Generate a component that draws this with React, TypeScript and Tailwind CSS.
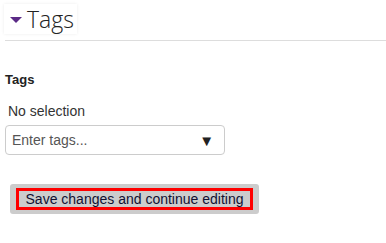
export default function App() {
  return (
    <div className="h-[243px] w-[386px] bg-white font-['Liberation_Sans',Arial,sans-serif] text-[#333]">
      <div className="pl-[4px] pt-[4px]">
        <div className="flex h-[30px] w-[73px] items-center gap-[5px] bg-white pl-[6px] shadow-[0_0_3px_rgba(0,0,0,0.08)]">
          <span className="mt-[2px] block h-0 w-0 border-x-[6px] border-t-[6px] border-x-transparent border-t-[#5b2a86]" />
          <span className="font-['Open_Sans',sans-serif] text-[23px] font-light leading-none text-[#222]">Tags</span>
        </div>
      </div>
      <div className="ml-[5px] mt-[6px] h-px bg-[#ddd]" />

      <div className="px-[5px] pt-[31px]">
        <div className="text-[13px] font-semibold leading-[16px] text-[#222]">Tags</div>
        <div className="mt-[15px] pl-[3px] text-[14px] leading-[16px] text-[#333]">No selection</div>
        <div className="mt-[6px] flex h-[30px] w-[220px] items-center justify-between rounded-[4px] border border-[#ccc] pl-[6px] pr-[10px]">
          <span className="text-[14px] text-[#555]">Enter tags...</span>
          <span className="text-[15px] leading-none text-[#222]">▼</span>
        </div>
      </div>

      <div className="pl-[10px] pt-[29px]">
        <div className="flex h-[30px] w-[249px] items-center justify-center rounded-[3px] bg-[#ccc]">
          <span className="flex h-[22px] w-[237px] items-center justify-center border-[3px] border-[#f00] text-[14px] text-[#111133]">
            Save changes and continue editing
          </span>
        </div>
      </div>
    </div>
  );
}
